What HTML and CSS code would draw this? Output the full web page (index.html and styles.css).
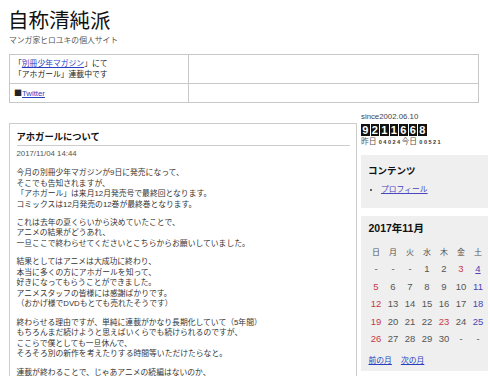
FILE: index.html
```html
<!DOCTYPE html>
<html lang="ja">
<head>
<meta charset="utf-8">
<title>自称清純派</title>
<link rel="stylesheet" href="styles.css">
</head>
<body>
<div class="page">
  <header class="site-head">
    <h1 class="site-title">自称清純派</h1>
    <p class="site-sub">マンガ家ヒロユキの個人サイト</p>
  </header>

  <table class="notice">
    <tr>
      <td class="notice-l">「<a href="#" class="lnk">別冊少年マガジン</a>」にて<br>「アホガール」連載中です</td>
      <td></td>
    </tr>
    <tr>
      <td class="notice-l"><span class="sq">■</span><a href="#" class="lnk">Twitter</a></td>
      <td></td>
    </tr>
  </table>

  <div class="cols">
    <main class="main">
      <article class="entry">
        <h2 class="entry-title">アホガールについて</h2>
        <div class="entry-date">2017/11/04 14:44</div>
        <div class="entry-body">
          <p>今月の別冊少年マガジンが9日に発売になって、<br>そこでも告知されますが、<br>「アホガール」は来月12月発売号で最終回となります。<br>コミックスは12月発売の12巻が最終巻となります。</p>
          <p>これは去年の夏くらいから決めていたことで、<br>アニメの結果がどうあれ、<br>一旦ここで終わらせてくださいとこちらからお願いしていました。</p>
          <p>結果としてはアニメは大成功に終わり、<br>本当に多くの方にアホガールを知って、<br>好きになってもらうことができました。<br>アニメスタッフの皆様には感謝ばかりです。<br>（おかげ様でDVDもとても売れたそうです）</p>
          <p>終わらせる理由ですが、単純に連載がかなり長期化していて（5年間）<br>もちろんまだ続けようと思えばいくらでも続けられるのですが、<br>ここらで僕としても一旦休んで、<br>そろそろ別の新作を考えたりする時間等いただけたらなと。</p>
          <p>連載が終わることで、じゃあアニメの続編はないのか、<br>というと</p>
        </div>
      </article>
    </main>

    <aside class="side">
      <div class="since">since2002.06.10</div>
      <div class="counter"><span class="dg">9</span><span class="dg">2</span><span class="dg">1</span><span class="dg">1</span><span class="dg">6</span><span class="dg">6</span><span class="dg">8</span></div>
      <div class="count-sub">昨日 <span class="num">04024</span>今日 <span class="num">00521</span></div>

      <section class="sbox contents">
        <h3 class="sbox-title">コンテンツ</h3>
        <ul class="menu">
          <li><a href="#" class="lnk-v">プロフィール</a></li>
        </ul>
      </section>

      <section class="sbox cal">
        <h3 class="cal-title">2017年11月</h3>
        <table class="cal-table">
          <tr class="cal-head"><td>日</td><td>月</td><td>火</td><td>水</td><td>木</td><td>金</td><td>土</td></tr>
          <tr><td>-</td><td>-</td><td>-</td><td>1</td><td>2</td><td class="sun">3</td><td><a href="#" class="sat-link">4</a></td></tr>
          <tr><td class="sun">5</td><td>6</td><td>7</td><td>8</td><td>9</td><td>10</td><td class="sat">11</td></tr>
          <tr><td class="sun">12</td><td>13</td><td>14</td><td>15</td><td>16</td><td>17</td><td class="sat">18</td></tr>
          <tr><td class="sun">19</td><td>20</td><td>21</td><td>22</td><td class="sun">23</td><td>24</td><td class="sat">25</td></tr>
          <tr><td class="sun">26</td><td>27</td><td>28</td><td>29</td><td>30</td><td>-</td><td>-</td></tr>
        </table>
        <div class="cal-nav"><a href="#" class="lnk">前の月</a><a href="#" class="lnk">次の月</a></div>
      </section>
    </aside>
  </div>
</div>
</body>
</html>
```

FILE: styles.css
```css
* { box-sizing: border-box; }

html, body {
  margin: 0;
  padding: 0;
  background: #fff;
  overflow: hidden;
}

body {
  font-family: "Liberation Sans", "Noto Sans CJK JP", sans-serif;
  color: #333;
  font-size: 7.8px;
}

.page {
  padding: 7px 2px 0 9px;
}

.site-title {
  margin: 0 0 0 -1px;
  font-family: "Noto Sans CJK JP", sans-serif;
  font-size: 20.5px;
  line-height: 24px;
  font-weight: 400;
  color: #111;
}

.site-sub {
  margin: 5px 0 0;
  font-size: 7.8px;
  line-height: 10px;
  color: #555;
}

.notice {
  margin-top: 8px;
  width: 470px;
  border-collapse: collapse;
  border: 1px solid #c4c4c4;
  table-layout: fixed;
}

.notice td {
  border: 1px solid #c8c8c8;
  padding: 3px 4px;
  line-height: 11px;
  font-size: 7.8px;
  color: #222;
  vertical-align: middle;
}

.notice-l { width: 179px; }

.sq {
  font-family: "Noto Sans CJK JP", sans-serif;
  font-size: 8px;
  color: #222;
}

.lnk { color: #2a3fc0; text-decoration: underline; }
.lnk-v { color: #4a45c0; text-decoration: underline; }

.cols {
  display: flex;
  gap: 4px;
  margin-top: 9px;
  align-items: flex-start;
}

.main {
  width: 348px;
  flex: none;
  margin-top: 10.5px;
  border: 1px solid #ccc;
  padding: 6px 6.5px 40px;
}

.entry-title {
  margin: 0;
  font-size: 9.3px;
  line-height: 14px;
  font-weight: 700;
  color: #111;
  padding-bottom: 1px;
  border-bottom: 1px solid #ccc;
}

.entry-date {
  margin-top: 3px;
  line-height: 10px;
  color: #555;
}

.entry-body {
  margin-top: 9.5px;
}

.entry-body p {
  margin: 0 0 7.9px;
  line-height: 10.5px;
  color: #333;
}

.side {
  width: 127px;
  flex: none;
}

.since {
  line-height: 10px;
  color: #444;
}

.counter {
  margin-top: 2px;
  display: flex;
  gap: 1px;
  height: 12px;
}

.dg {
  width: 8.5px;
  height: 12px;
  background: #111;
  color: #fff;
  font-weight: 700;
  font-size: 11px;
  line-height: 12px;
  text-align: center;
}

.count-sub {
  margin-top: 1.3px;
  line-height: 10px;
  color: #555;
  white-space: nowrap;
}

.num {
  font-size: 5.5px;
  font-weight: 700;
  letter-spacing: 1.5px;
  color: #333;
}

.sbox {
  background: #efefef;
}

.contents {
  margin-top: 7.7px;
  padding: 9.7px 6px 11.7px 7px;
}

.sbox-title {
  margin: 0;
  font-size: 9.5px;
  line-height: 12px;
  font-weight: 700;
  color: #111;
}

.menu {
  margin: 7.3px 0 0;
  padding: 0 0 0 13px;
  list-style: disc;
  line-height: 12px;
}

.menu li { color: #333; }

.cal {
  margin-top: 8px;
  padding: 6px 1.5px 5.5px 6.5px;
}

.cal-title {
  margin: 0 0 0 1px;
  font-size: 10.5px;
  line-height: 13px;
  font-weight: 700;
  color: #111;
}

.cal-table {
  margin-top: 8px;
  width: 119px;
  border-collapse: collapse;
  table-layout: fixed;
}

.cal-table td {
  padding: 0;
  height: 17.5px;
  text-align: center;
  font-size: 9.5px;
  color: #555;
  vertical-align: middle;
}

.cal-head td {
  font-size: 8px;
  color: #555;
}

.cal-table .sun { color: #c8384a; }
.cal-table .sat { color: #4a45b8; }
.sat-link { color: #4a45b8; text-decoration: underline; }

.cal-nav {
  margin-top: 7.3px;
  padding-left: 1px;
  line-height: 11px;
  display: flex;
  gap: 9px;
}
```
